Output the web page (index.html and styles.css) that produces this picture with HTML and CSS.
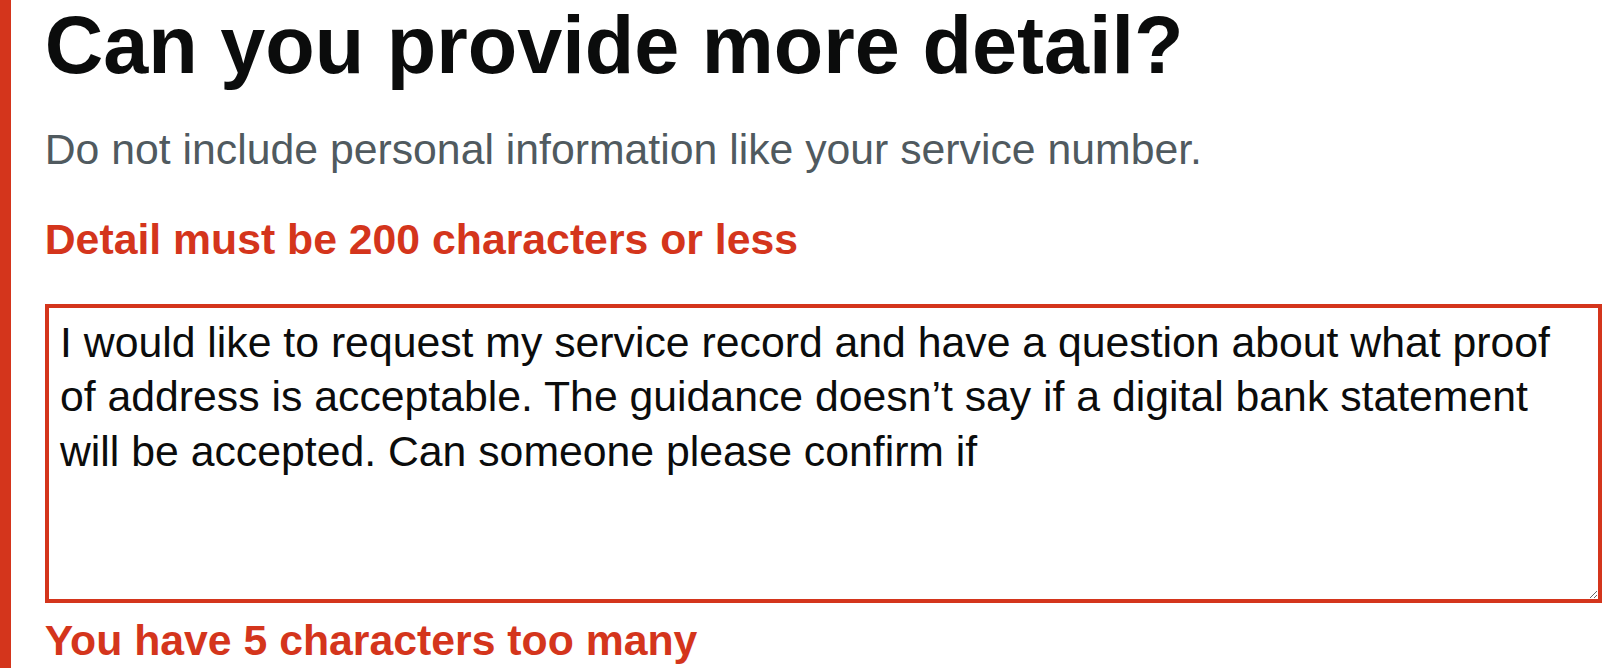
FILE: index.html
```html
<!DOCTYPE html>
<html lang="en">
<head>
<meta charset="utf-8">
<title>Can you provide more detail?</title>
<link rel="stylesheet" href="styles.css">
</head>
<body>
<div class="form-group form-group--error">
  <h1 class="heading">
    <label class="label" for="detail">Can you provide more detail?</label>
  </h1>
  <div class="hint" id="detail-hint">Do not include personal information like your service number.</div>
  <p class="error-message" id="detail-error">Detail must be 200 characters or less</p>
  <textarea class="textarea textarea--error" id="detail" name="detail" rows="5" aria-describedby="detail-hint detail-error">I would like to request my service record and have a question about what proof of address is acceptable. The guidance doesn’t say if a digital bank statement will be accepted. Can someone please confirm if</textarea>
  <div class="count-message" id="detail-info">You have 5 characters too many</div>
</div>
</body>
</html>
```

FILE: styles.css
```css
html, body {
  margin: 0;
  padding: 0;
  background: #ffffff;
}

body {
  font-family: "Liberation Sans", Arial, sans-serif;
  color: #0b0c0c;
  overflow: hidden;
}

.form-group {
  display: flex;
  flex-direction: column;
  align-items: stretch;
}

.form-group--error {
  border-left: 11.25px solid #d4351c;
  padding-left: 33.75px;
}

.heading {
  margin: 0 0 31px;
  font-size: 81px;
  line-height: 90px;
  font-weight: 700;
  color: #0b0c0c;
}

.label {
  display: block;
}

.hint {
  margin: 0 0 34px;
  font-size: 42.75px;
  line-height: 56.25px;
  color: #505a5f;
}

.error-message {
  margin: 0 0 36.5px;
  font-size: 42.75px;
  line-height: 56.25px;
  font-weight: 700;
  color: #d4351c;
}

.textarea {
  box-sizing: border-box;
  display: block;
  width: 100%;
  height: 299px;
  margin: 0;
  padding: 6.5px 11.25px;
  border: 4.5px solid #0b0c0c;
  border-radius: 0;
  font-family: "Liberation Sans", Arial, sans-serif;
  font-size: 42.75px;
  line-height: 54.5px;
  color: #0b0c0c;
  background: #ffffff;
  resize: vertical;
}

.textarea--error {
  border-color: #d4351c;
}

.count-message {
  margin: 9px 0 0;
  font-size: 42.75px;
  line-height: 56.25px;
  font-weight: 700;
  color: #d4351c;
}
```
